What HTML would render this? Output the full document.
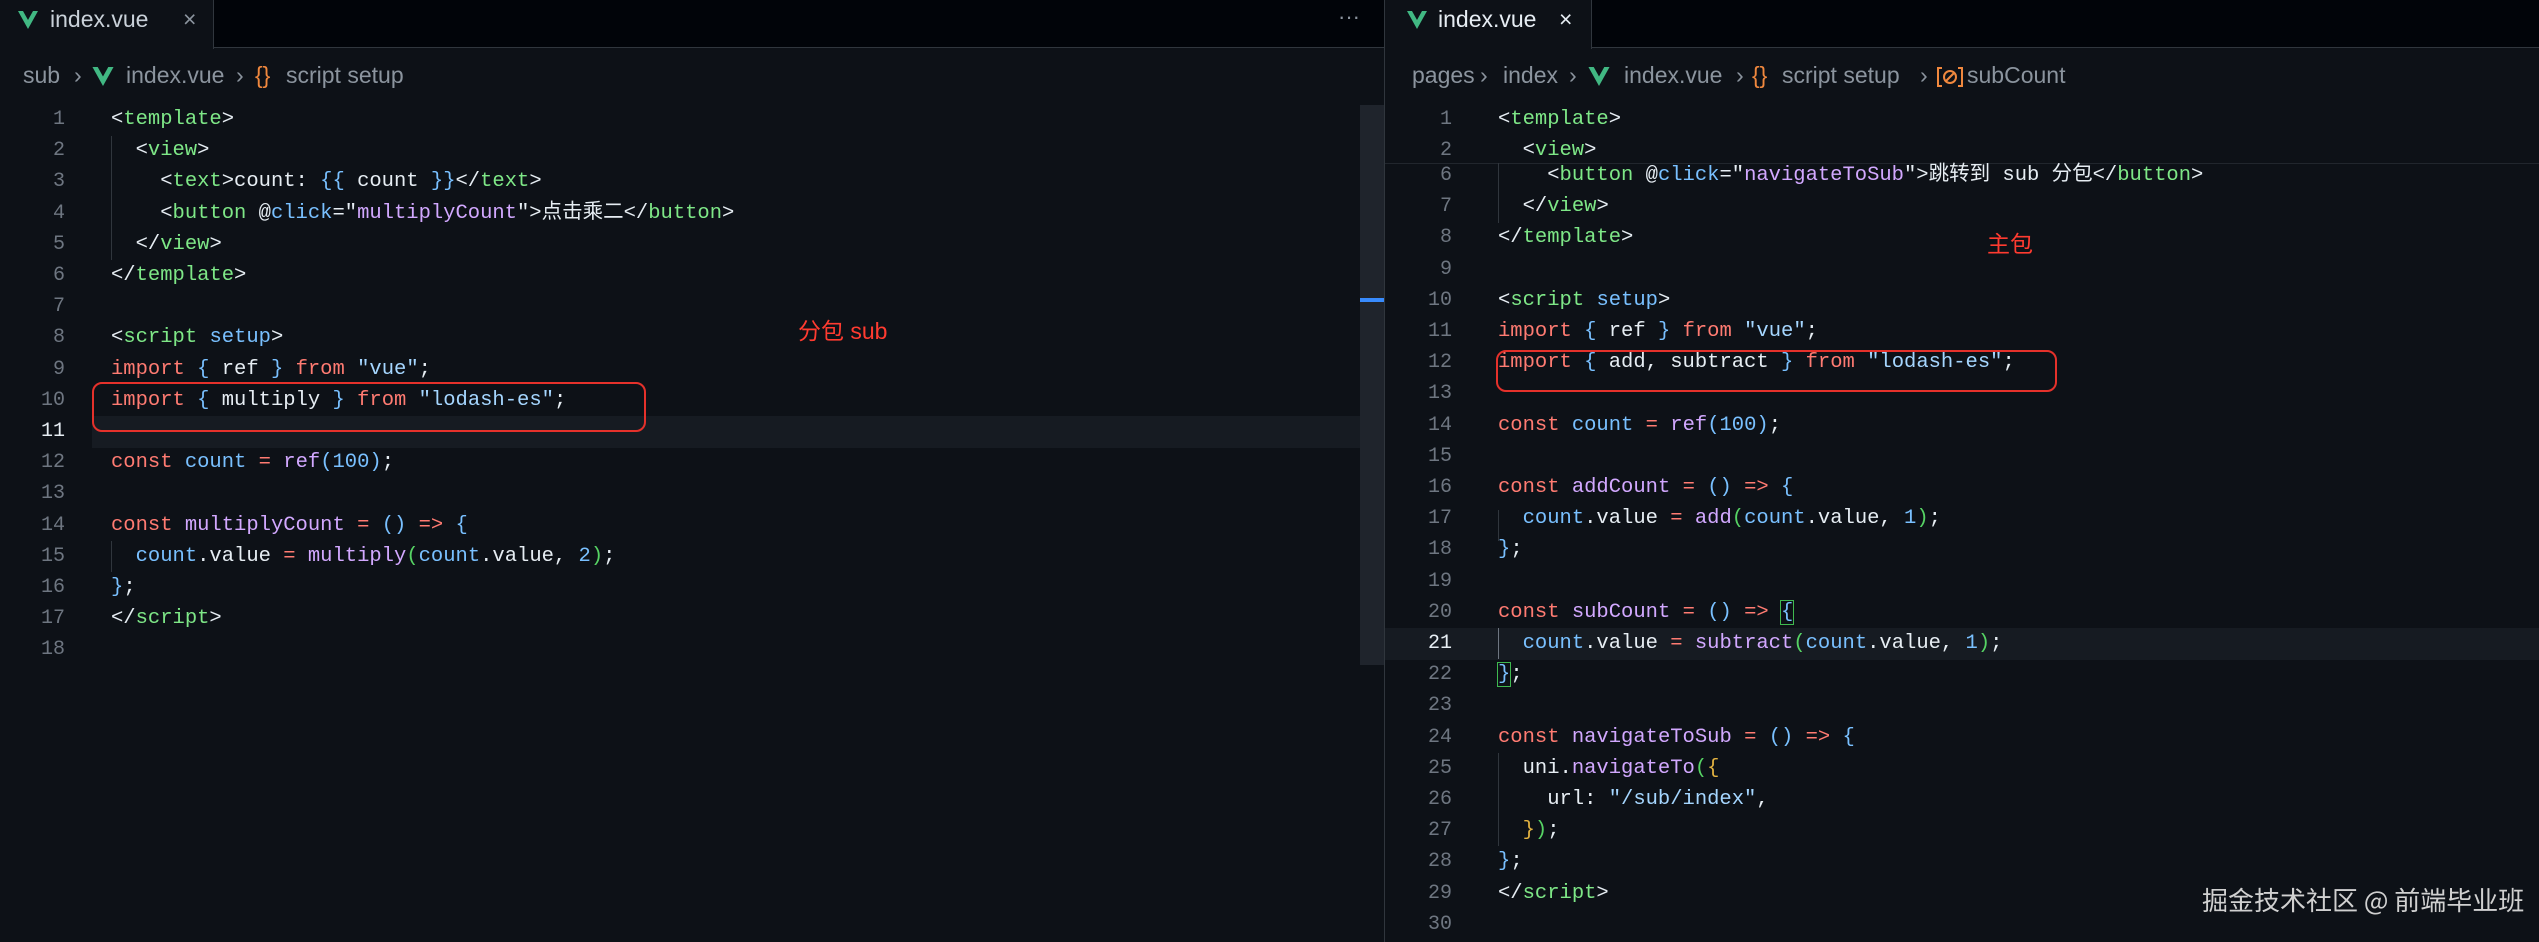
<!DOCTYPE html>
<html><head><meta charset="utf-8"><style>
*{margin:0;padding:0;box-sizing:border-box}
body{width:2539px;height:942px;background:#0d1117;overflow:hidden;position:relative;font-family:"Liberation Sans","Noto Sans CJK SC",sans-serif;color:#e6edf3}
.tabbar{position:absolute;top:0;height:48px;background:#010409;border-bottom:1px solid #30363d}
.tab{position:absolute;top:0;height:49px;background:#0d1117;border-right:1px solid #30363d}
.tab span{position:absolute;top:6px;font-size:23px;color:#c9d1d9}
.x{position:absolute;top:4px;font-size:24px}
.bc{position:absolute;top:62px;font-size:23px;color:#8b949e;white-space:pre}
.bc span{position:absolute;top:0}
.code{position:absolute;font-family:"Liberation Mono","Noto Sans CJK SC",monospace;font-size:20.5px;line-height:31.2px;white-space:pre}
.ln{position:absolute;font-family:"Liberation Mono",monospace;font-size:20px;line-height:31.2px;color:#6e7681;text-align:right;width:40px}
.t{color:#7ee787}.k{color:#ff7b72}.s{color:#a5d6ff}.f{color:#d2a8ff}.v{color:#79c0ff}.y{color:#e3b341}.g{color:#56d364}
.guide{position:absolute;width:1px;background:#30363d}
.box{position:absolute;border:2.5px solid #e5312b;border-radius:10px}
.red{position:absolute;color:#ff3b30;font-size:23px}
</style></head><body>
<!-- left -->
<div class="tabbar" style="left:0;width:1384px"></div>
<div class="tab" style="left:0;width:214px">
<svg style="position:absolute;left:18px;top:11px" width="20" height="18" viewBox="0 0 20 18"><polygon points="0,0 5,0 10,9 15,0 20,0 10,18" fill="#41b883"/></svg>
<span style="left:50px">index.vue</span><span class="x" style="left:183px;color:#8b949e">×</span></div>
<div style="position:absolute;left:1338px;top:4px;color:#8b949e;font-size:22px">···</div>
<div class="bc" style="left:0">
<span style="left:23px">sub</span><span style="left:74px">›</span>
<svg style="position:absolute;left:92px;top:5px" width="22" height="19" viewBox="0 0 20 18"><polygon points="0,0 5,0 10,9 15,0 20,0 10,18" fill="#41b883"/></svg>
<span style="left:126px">index.vue</span><span style="left:236px">›</span><span style="left:255px;color:#f0883e">{}</span><span style="left:286px">script setup</span></div>
<div style="position:absolute;left:92px;top:416px;width:1268px;height:32px;background:#161b22"></div>
<div style="position:absolute;left:1360px;top:105px;width:24px;height:560px;background:#1f242c"></div>
<div style="position:absolute;left:1360px;top:298px;width:24px;height:4px;background:#388bfd"></div>
<div class="ln" style="left:25px;top:104px">1<br>2<br>3<br>4<br>5<br>6<br>7<br>8<br>9<br>10<br><span style="color:#e6edf3">11</span><br>12<br>13<br>14<br>15<br>16<br>17<br>18</div>
<div class="guide" style="left:111px;top:136px;height:124px"></div>
<div class="guide" style="left:111px;top:541px;height:31px"></div>
<div class="code" style="left:111px;top:104px">&lt;<span class="t">template</span>&gt;
  &lt;<span class="t">view</span>&gt;
    &lt;<span class="t">text</span>&gt;count: <span class="v">{{</span> count <span class="v">}}</span>&lt;/<span class="t">text</span>&gt;
    &lt;<span class="t">button</span> @<span class="v">click</span>="<span class="f">multiplyCount</span>"&gt;点击乘二&lt;/<span class="t">button</span>&gt;
  &lt;/<span class="t">view</span>&gt;
&lt;/<span class="t">template</span>&gt;

&lt;<span class="t">script</span> <span class="v">setup</span>&gt;
<span class="k">import</span> <span class="v">{</span> ref <span class="v">}</span> <span class="k">from</span> <span class="s">"vue"</span>;
<span class="k">import</span> <span class="v">{</span> multiply <span class="v">}</span> <span class="k">from</span> <span class="s">"lodash-es"</span>;

<span class="k">const</span> <span class="v">count</span> <span class="k">=</span> <span class="f">ref</span><span class="v">(100)</span>;

<span class="k">const</span> <span class="f">multiplyCount</span> <span class="k">=</span> <span class="v">()</span> <span class="k">=&gt;</span> <span class="v">{</span>
  <span class="v">count</span>.value <span class="k">=</span> <span class="f">multiply</span><span class="g">(</span><span class="v">count</span>.value, <span class="v">2</span><span class="g">)</span>;
<span class="v">}</span>;
&lt;/<span class="t">script</span>&gt;
</div>
<div class="box" style="left:92px;top:382px;width:554px;height:50px"></div>
<div class="red" style="left:798px;top:312px">分包 sub</div>

<div style="position:absolute;left:1384px;top:0;width:1px;height:942px;background:#30363d"></div>
<!-- right -->
<div class="tabbar" style="left:1385px;width:1154px"></div>
<div class="tab" style="left:1385px;width:207px">
<svg style="position:absolute;left:22px;top:11px" width="20" height="18" viewBox="0 0 20 18"><polygon points="0,0 5,0 10,9 15,0 20,0 10,18" fill="#41b883"/></svg>
<span style="left:53px;color:#e6edf3">index.vue</span><span class="x" style="left:174px;color:#e6edf3">×</span></div>
<div class="bc" style="left:0">
<span style="left:1412px">pages</span><span style="left:1480px">›</span><span style="left:1503px">index</span><span style="left:1569px">›</span>
<svg style="position:absolute;left:1588px;top:5px" width="22" height="19" viewBox="0 0 20 18"><polygon points="0,0 5,0 10,9 15,0 20,0 10,18" fill="#41b883"/></svg>
<span style="left:1624px">index.vue</span><span style="left:1736px">›</span><span style="left:1752px;color:#f0883e">{}</span><span style="left:1782px">script setup</span><span style="left:1920px">›</span>
<svg style="position:absolute;left:1936px;top:4px" width="28" height="22" viewBox="0 0 28 22" fill="none" stroke="#f0883e" stroke-width="2"><path d="M6 2H2V20H6M22 2H26V20H22"/><circle cx="14" cy="11" r="6"/><path d="M10 15L18 7"/></svg>
<span style="left:1967px">subCount</span></div>
<div style="position:absolute;left:1385px;top:628px;width:1154px;height:32px;background:#161b22"></div>
<div class="ln" style="left:1412px;top:104px">1<br>2</div>
<div class="code" style="left:1498px;top:104px">&lt;<span class="t">template</span>&gt;
  &lt;<span class="t">view</span>&gt;</div>
<div style="position:absolute;left:1385px;top:163px;width:1154px;height:1px;background:#21262d"></div>
<div class="ln" style="left:1412px;top:160px">6<br>7<br>8<br>9<br>10<br>11<br>12<br>13<br>14<br>15<br>16<br>17<br>18<br>19<br>20<br><span style="color:#e6edf3">21</span><br>22<br>23<br>24<br>25<br>26<br>27<br>28<br>29<br>30</div>
<div class="guide" style="left:1498px;top:163px;height:60px"></div>
<div class="guide" style="left:1498px;top:510px;height:31px"></div>
<div class="guide" style="left:1498px;top:628px;height:31px;background:#6e7681"></div>
<div class="guide" style="left:1498px;top:753px;height:93px"></div>
<div class="code" style="left:1498px;top:160px">    &lt;<span class="t">button</span> @<span class="v">click</span>="<span class="f">navigateToSub</span>"&gt;跳转到 sub 分包&lt;/<span class="t">button</span>&gt;
  &lt;/<span class="t">view</span>&gt;
&lt;/<span class="t">template</span>&gt;

&lt;<span class="t">script</span> <span class="v">setup</span>&gt;
<span class="k">import</span> <span class="v">{</span> ref <span class="v">}</span> <span class="k">from</span> <span class="s">"vue"</span>;
<span class="k">import</span> <span class="v">{</span> add, subtract <span class="v">}</span> <span class="k">from</span> <span class="s">"lodash-es"</span>;

<span class="k">const</span> <span class="v">count</span> <span class="k">=</span> <span class="f">ref</span><span class="v">(100)</span>;

<span class="k">const</span> <span class="f">addCount</span> <span class="k">=</span> <span class="v">()</span> <span class="k">=&gt;</span> <span class="v">{</span>
  <span class="v">count</span>.value <span class="k">=</span> <span class="f">add</span><span class="g">(</span><span class="v">count</span>.value, <span class="v">1</span><span class="g">)</span>;
<span class="v">}</span>;

<span class="k">const</span> <span class="f">subCount</span> <span class="k">=</span> <span class="v">()</span> <span class="k">=&gt;</span> <span class="v" style="outline:1px solid #3fb950">{</span>
  <span class="v">count</span>.value <span class="k">=</span> <span class="f">subtract</span><span class="g">(</span><span class="v">count</span>.value, <span class="v">1</span><span class="g">)</span>;
<span class="v" style="outline:1px solid #3fb950">}</span>;

<span class="k">const</span> <span class="f">navigateToSub</span> <span class="k">=</span> <span class="v">()</span> <span class="k">=&gt;</span> <span class="v">{</span>
  uni.<span class="f">navigateTo</span><span class="g">(</span><span class="y">{</span>
    url: <span class="s">"/sub/index"</span>,
  <span class="y">}</span><span class="g">)</span>;
<span class="v">}</span>;
&lt;/<span class="t">script</span>&gt;
</div>
<div class="box" style="left:1496px;top:350px;width:561px;height:42px"></div>
<div class="red" style="left:1987px;top:225px">主包</div>
<div style="position:absolute;left:2202px;top:881px;font-size:26px;color:#d0d0d0;font-family:'Noto Sans CJK SC',sans-serif;white-space:nowrap">掘金技术社区 @ 前端毕业班</div>
</body></html>
